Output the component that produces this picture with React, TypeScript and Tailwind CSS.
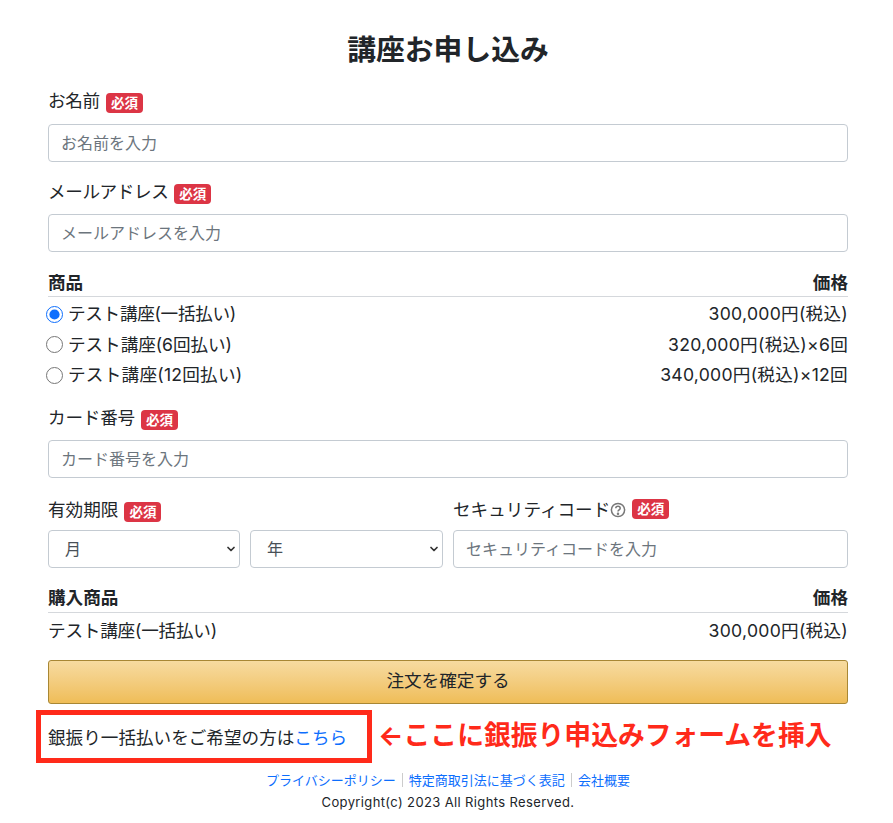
import React from 'react';
import { ChevronDown } from 'lucide-react';

const font = "font-['Inter','Noto_Sans_CJK_JP',sans-serif]";

function Required() {
  return (
    <span className="relative top-[1px] ml-1.5 inline-block rounded-[4px] bg-[#dc3545] px-[5px] text-[13.5px] leading-[20px] font-bold tracking-normal text-white">
      必須
    </span>
  );
}

function TextField({ placeholder }: { placeholder: string }) {
  return (
    <input
      type="text"
      placeholder={placeholder}
      className="block h-[38px] w-full rounded-[4px] border border-[#c4cbd2] bg-white px-3 text-[16px] text-[#495057] placeholder:text-[#6c757d]"
    />
  );
}

function SelectField({ label, className }: { label: string; className: string }) {
  return (
    <div className={`relative ${className}`}>
      <select className="block h-[38px] w-full appearance-none rounded-[4px] border border-[#c4cbd2] bg-white px-3 pl-[16px] text-[16px] text-[#495057]">
        <option>{label}</option>
      </select>
      <ChevronDown className="absolute top-[13px] right-[3px] h-3 w-3 text-[#333]" strokeWidth={3.5} />
    </div>
  );
}

const plans = [
  { name: 'テスト講座(一括払い)', price: '300,000円(税込)', checked: true, track: 'tracking-[-0.3px]' },
  { name: 'テスト講座(6回払い)', price: '320,000円(税込)×6回', checked: false, track: 'tracking-[-0.05px]' },
  { name: 'テスト講座(12回払い)', price: '340,000円(税込)×12回', checked: false, track: 'tracking-[0.25px]' },
];

export default function App() {
  return (
    <div className={`${font} relative h-[823px] w-[893px] overflow-hidden bg-white text-[#212529]`}>
      <div className="ml-12 w-[800px]">
        <h1 className="pt-[30px] text-center text-[28.8px] leading-[40px] font-bold">講座お申し込み</h1>

        <div className="mt-[19px] h-[28px] text-[17.6px] leading-[24px] tracking-[-0.3px]">
          お名前<Required />
        </div>
        <div className="mt-[7px]">
          <TextField placeholder="お名前を入力" />
        </div>

        <div className="mt-[18px] h-[28px] text-[17.6px] leading-[24px] tracking-[-0.4px]">
          メールアドレス<Required />
        </div>
        <div className="mt-[6px]">
          <TextField placeholder="メールアドレスを入力" />
        </div>

        <div className="mt-[18px] flex h-[27px] items-center justify-between border-b border-[#d5d8dc] text-[17.6px] font-bold">
          <span>商品</span>
          <span>価格</span>
        </div>
        <div className="mt-[2px]">
          {plans.map((p) => (
            <div key={p.name} className="flex h-[30.5px] items-center justify-between text-[17.6px]">
              <label className={`flex items-center ${p.track}`}>
                <input type="radio" name="plan" defaultChecked={p.checked} className="-ml-[2px] mr-[5px] h-[17px] w-[17px] accent-[#0d6efd]" />
                {p.name}
              </label>
              <span className="tracking-[0.27px]">{p.price}</span>
            </div>
          ))}
        </div>

        <div className="mt-[15px] h-[28px] text-[17.6px] leading-[24px] tracking-[-0.2px]">
          カード番号<Required />
        </div>
        <div className="mt-[6px]">
          <TextField placeholder="カード番号を入力" />
        </div>

        <div className="mt-[20px] flex gap-[10px]">
          <div className="w-[395px]">
            <div className="h-[28px] text-[17.6px] leading-[24px]">
              有効期限<Required />
            </div>
            <div className="mt-[4px] flex gap-[10px]">
              <SelectField label="月" className="w-[192px] shrink-0" />
              <SelectField label="年" className="flex-1" />
            </div>
          </div>
          <div className="flex-1">
            <div className="flex h-[28px] items-start text-[17.6px] leading-[24px]">
              セキュリティコード
              <svg viewBox="0 0 16 16" className="mt-[4px] h-[16px] w-[16px] shrink-0 text-[#777]" fill="none" stroke="currentColor" strokeWidth="1.5">
                <circle cx="8" cy="8" r="6.6" />
                <path d="M5.8 6.3c0-1.3 1-2 2.2-2s2.2.8 2.2 1.9c0 1.6-2.2 1.6-2.2 3.3" />
                <circle cx="8" cy="11.7" r=".5" fill="currentColor" />
              </svg>
              <Required />
            </div>
            <div className="mt-[4px]">
              <TextField placeholder="セキュリティコードを入力" />
            </div>
          </div>
        </div>

        <div className="mt-[17px] flex h-[28px] items-center justify-between border-b border-[#d5d8dc] text-[17.6px] font-bold">
          <span>購入商品</span>
          <span>価格</span>
        </div>
        <div className="mt-[3px] flex h-[32px] items-center justify-between text-[17.6px]">
          <span className="tracking-[-0.2px]">テスト講座(一括払い)</span>
          <span className="tracking-[0.27px]">300,000円(税込)</span>
        </div>

        <button className="mt-[12px] block h-[44px] w-full rounded-[3px] border border-[#a88734] bg-gradient-to-b from-[#f7dba0] to-[#efbd57] text-[17.6px]">
          注文を確定する
        </button>

        <p className="mt-[21px] text-[17.6px] leading-[26px]">
          銀振り一括払いをご希望の方は<a className="text-[#0d6efd]">こちら</a>
        </p>

        <div className="mt-[19px] flex items-center justify-center text-[13px] leading-[20px] text-[#0d6efd]">
          <a>プライバシーポリシー</a>
          <span className="mx-[6px] h-[14px] w-px bg-[#ccc]" />
          <a>特定商取引法に基づく表記</a>
          <span className="mx-[6px] h-[14px] w-px bg-[#ccc]" />
          <a>会社概要</a>
        </div>
        <p className="mt-[2px] text-center text-[13px] leading-[20px] tracking-[0.37px]">Copyright(c) 2023 All Rights Reserved.</p>
      </div>

      {/* annotation drawn over the page */}
      <div className="absolute top-[710px] left-[36px] h-[53px] w-[336px] border-[5px] border-[#ff2a1a]" />
      <div className="absolute top-[717px] left-[378px] text-[26.8px] leading-[36px] font-bold whitespace-nowrap text-[#ff2a1a]">
        ←ここに銀振り申込みフォームを挿入
      </div>
    </div>
  );
}
